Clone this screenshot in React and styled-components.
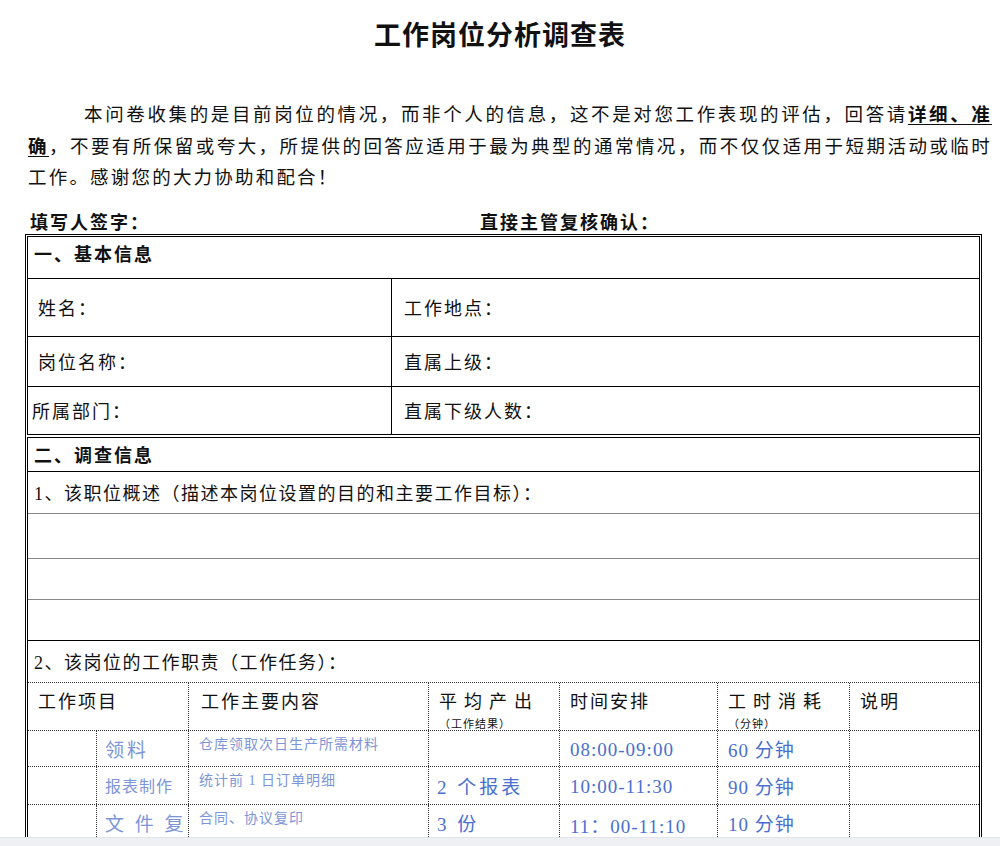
import React from "react";
import styled, { createGlobalStyle } from "styled-components";

const G = createGlobalStyle`
  html,body{margin:0;padding:0;background:#fff;overflow:hidden;}
  body{font-family:"Liberation Serif","Noto Sans CJK SC",serif;color:#111;}
`;
const Page = styled.div`width:1000px;height:846px;overflow:hidden;position:relative;`;
const Title = styled.h1`margin:0;padding-top:14px;height:44px;text-align:center;font-size:27px;font-weight:bold;letter-spacing:1px;`;
const Para = styled.p`margin:42px 8px 0 28px;font-size:18.5px;line-height:31.5px;text-indent:56px;letter-spacing:2.2px;text-align:justify;`;
const Em = styled.b`text-decoration:underline;text-underline-offset:3px;`;
const Sign = styled.div`display:flex;margin:13px 0 0 30px;font-size:18px;font-weight:bold;letter-spacing:2px;height:26px;`;
const SignItem = styled.div`width:${p=>p.w}px;`;
const Frame = styled.div`margin:0 18px 0 25px;border:1.5px solid #000;padding:1px;`;
const Box = styled.div`border:1px solid #000;border-top:${p=>p.top?"1px solid #000":"none"};margin-top:${p=>p.mt||0}px;border-bottom:${p=>p.nb?"none":"1px solid #000"};`;
const Row = styled.div`display:flex;height:${p=>p.h}px;border-top:${p=>p.first?"none":p.line};`;
const Cell = styled.div`
  width:${p=>p.w?p.w+"px":"auto"};flex:${p=>p.w?"none":"1"};
  border-left:${p=>p.bl||"none"};box-sizing:border-box;
  padding:${p=>p.pad||"0 0 0 8px"};font-size:${p=>p.fs||18}px;letter-spacing:${p=>p.ls||2}px;
  display:flex;flex-direction:column;justify-content:${p=>p.jc||"center"};
  color:${p=>p.c||"#111"};font-weight:${p=>p.b?"bold":"normal"};
`;
const Small = styled.span`font-size:11px;letter-spacing:1px;margin-top:2px;`;
const Bar = styled.div`position:absolute;left:0;right:0;bottom:0;height:8px;background:#eef0f4;border-top:1px solid #e2e4ea;`;

const S = "1px solid #000";
const D = "1px dotted #333";
const LG = "1px solid #888";
const blue = "#4a6fd0";
const lb = "#7c95d8";

export default function App(){
  return <Page><G/>
    <Title>工作岗位分析调查表</Title>
    <Para>本问卷收集的是目前岗位的情况，而非个人的信息，这不是对您工作表现的评估，回答请<Em>详细、准确</Em>，不要有所保留或夸大，所提供的回答应适用于最为典型的通常情况，而不仅仅适用于短期活动或临时工作。感谢您的大力协助和配合！</Para>
    <Sign><SignItem w={450}>填写人签字：</SignItem><SignItem>直接主管复核确认：</SignItem></Sign>
    <Frame>
      <Box top>
        <Row h={41} first><Cell b pad="3px 0 6px 6px" jc="flex-start">一、基本信息</Cell></Row>
        <Row h={57} line={S}><Cell w={363} pad="0 0 0 10px">姓名：</Cell><Cell bl={S} pad="0 0 0 12px">工作地点：</Cell></Row>
        <Row h={49} line={S}><Cell w={363} pad="0 0 0 10px">岗位名称：</Cell><Cell bl={S} pad="0 0 0 12px">直属上级：</Cell></Row>
        <Row h={47} line={S}><Cell w={363} pad="0 0 0 4px">所属部门：</Cell><Cell bl={S} pad="0 0 0 12px">直属下级人数：</Cell></Row>
      </Box>
      <Box top mt={2} nb>
        <Row h={33} first><Cell b pad="0 0 0 6px">二、调查信息</Cell></Row>
        <Row h={41} line={S}><Cell pad="0 0 0 6px" ls={1.5}>1、该职位概述（描述本岗位设置的目的和主要工作目标）：</Cell></Row>
        <Row h={44} line={LG}/>
        <Row h={40} line={LG}/>
        <Row h={40} line={LG}/>
        <Row h={41} line={S}><Cell pad="0 0 0 6px" ls={1.5}>2、该岗位的工作职责（工作任务）：</Cell></Row>
        <Row h={47} line={D}>
          <Cell w={160} jc="flex-start" pad="4px 0 0 10px">工作项目</Cell>
          <Cell w={240} bl={D} jc="flex-start" pad="4px 0 0 12px">工作主要内容</Cell>
          <Cell w={131} bl={D} jc="flex-start" pad="4px 0 0 10px" ls={7}>平均产出<Small>（工作结果）</Small></Cell>
          <Cell w={158} bl={D} jc="flex-start" pad="4px 0 0 10px">时间安排</Cell>
          <Cell w={132} bl={D} jc="flex-start" pad="4px 0 0 10px" ls={7}>工时消耗<Small>（分钟）</Small></Cell>
          <Cell bl={D} jc="flex-start" pad="4px 0 0 10px">说明</Cell>
        </Row>
        {[["领料","仓库领取次日生产所需材料","","08:00-09:00","60 分钟",35,1],["报表制作","统计前 1 日订单明细","2 个报表","10:00-11:30","90 分钟",37,0],["文 件 复","合同、协议复印","3 份","11：00-11:10","10 分钟",36,1],["","","","","",30,0]].map((r,i)=>
          <Row key={i} h={r[5]} line={D}>
            <Cell w={68}/>
            <Cell w={92} bl={D} c={lb} fs={r[6]?19:16} ls={r[6]?3:1} pad="0 0 0 8px">{r[0]}</Cell>
            <Cell w={240} bl={D} c={lb} fs={14} ls={1} jc="flex-start" pad="2px 0 0 10px">{r[1]}</Cell>
            <Cell w={131} bl={D} c={blue} fs={19} ls={3}>{r[2]}</Cell>
            <Cell w={158} bl={D} c={blue} fs={19} ls={1} pad="4px 0 0 10px">{r[3]}</Cell>
            <Cell w={132} bl={D} c={blue} fs={19} ls={1} pad="0 0 0 10px">{r[4]}</Cell>
            <Cell bl={D}/>
          </Row>)}
      </Box>
    </Frame>
    <Bar/>
  </Page>;
}
